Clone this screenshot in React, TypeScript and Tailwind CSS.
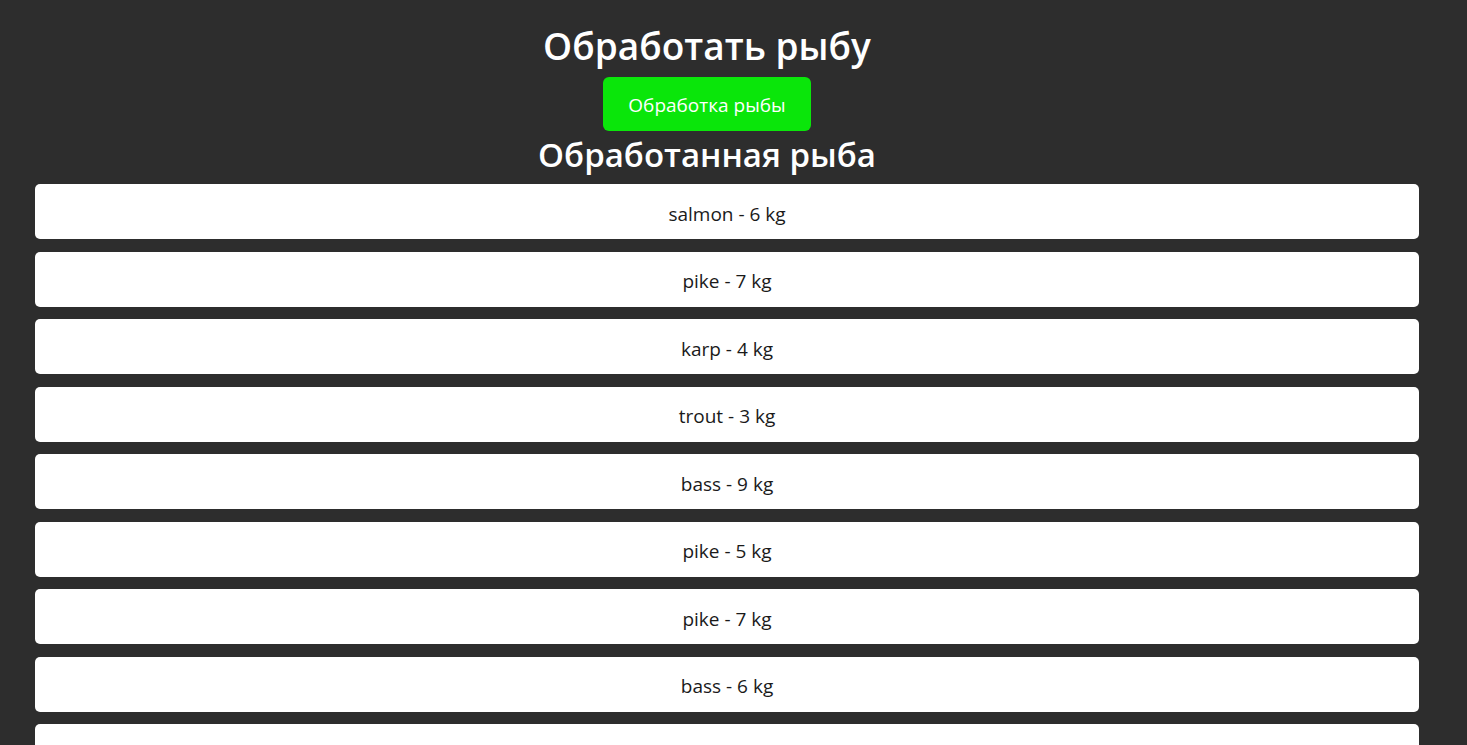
const fish = [
  { name: 'salmon', weight: 6 },
  { name: 'pike', weight: 7 },
  { name: 'karp', weight: 4 },
  { name: 'trout', weight: 3 },
  { name: 'bass', weight: 9 },
  { name: 'pike', weight: 5 },
  { name: 'pike', weight: 7 },
  { name: 'bass', weight: 6 },
  { name: 'karp', weight: 2 },
]

export default function App() {
  return (
    <main
      className="min-h-screen bg-[#2d2d2d] pt-[22px] pb-8"
      style={{ fontFamily: '"Open Sans", "Noto Sans", sans-serif' }}
    >
      <div className="w-[1414px] flex flex-col items-center">
        <h1 className="text-[37px] leading-[48px] font-semibold text-white">Обработать рыбу</h1>
        <button className="mt-[7px] w-[208px] h-[54px] rounded-md bg-[#0ae60a] text-white text-[19px] pt-[3px]">
          Обработка рыбы
        </button>
        <h2 className="text-[33px] leading-[48px] font-semibold text-white">Обработанная рыба</h2>
      </div>
      <ul className="mt-[5px] ml-[35px] w-[1384px] flex flex-col gap-[12.5px]">
        {fish.map((f, i) => (
          <li
            key={i}
            className="h-[55px] pt-[5px] rounded-[5px] bg-white flex items-center justify-center text-[19px] text-[#1a1a1a]"
          >
            {f.name} - {f.weight} kg
          </li>
        ))}
      </ul>
    </main>
  )
}
